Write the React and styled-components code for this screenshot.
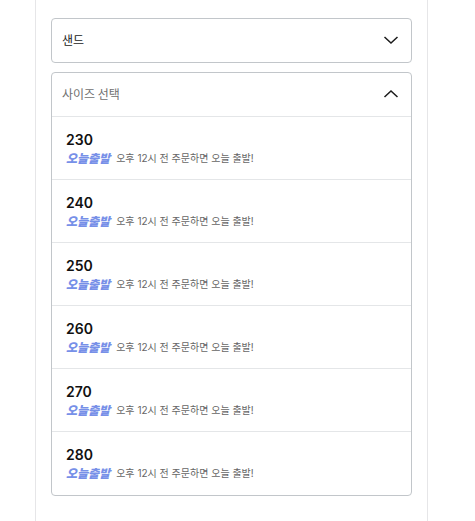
import { useState } from 'react';
import styled, { createGlobalStyle } from 'styled-components';

const sizes = ['230', '240', '250', '260', '270', '280'];

const Chevron = ({ up }) => (
  <svg width="16" height="10" viewBox="0 0 16 10" fill="none" aria-hidden="true">
    <path
      d={up ? 'M1.5 8L8 2L14.5 8' : 'M1.5 2L8 8L14.5 2'}
      stroke="#1c1c1c"
      strokeWidth="1.5"
    />
  </svg>
);

const App = () => {
  const [open, setOpen] = useState(true);
  const [selected, setSelected] = useState('');

  const handleSelect = (size) => {
    setSelected(size);
    setOpen(false);
  };

  return (
    <>
      <GlobalStyle />
      <Page>
        <Content>
          <Select>
            <SelectButton type="button" $filled>
              샌드
              <Chevron />
            </SelectButton>
          </Select>
          <Select>
            <SelectButton
              type="button"
              $filled={selected !== ''}
              aria-expanded={open}
              onClick={() => setOpen(!open)}
            >
              {selected || '사이즈 선택'}
              <Chevron up={open} />
            </SelectButton>
            {open && (
              <OptionList>
                {sizes.map((size) => (
                  <li key={size}>
                    <Option type="button" onClick={() => handleSelect(size)}>
                      <Size>{size}</Size>
                      <Delivery>
                        <Badge>오늘출발</Badge>
                        <Notice>오후 12시 전 주문하면 오늘 출발!</Notice>
                      </Delivery>
                    </Option>
                  </li>
                ))}
              </OptionList>
            )}
          </Select>
        </Content>
      </Page>
    </>
  );
};

export default App;

const GlobalStyle = createGlobalStyle`
  * {
    box-sizing: border-box;
  }

  body {
    margin: 0;
    background-color: #ffffff;
    font-family: Inter, "Noto Sans CJK KR", sans-serif;
  }

  button {
    font-family: inherit;
    text-align: left;
    background: none;
    border: 0;
    cursor: pointer;
  }
`;

const Page = styled.div`
  min-height: 100vh;
  padding: 0 47px 0 35px;
  display: flex;
`;

const Content = styled.main`
  flex: 1;
  display: flex;
  flex-direction: column;
  gap: 9px;
  padding: 18px 15px;
  border: solid #e6e6e8;
  border-width: 0 1px;
`;

const Select = styled.div`
  border: 1px solid #c2c6ca;
  border-radius: 4px;
  overflow: hidden;
`;

const SelectButton = styled.button`
  width: 100%;
  height: 43px;
  padding: 0 12px 2px 10px;
  display: flex;
  align-items: center;
  justify-content: space-between;
  font-family: "Noto Sans CJK KR", sans-serif;
  font-size: 12px;
  line-height: 18px;
  color: ${({ $filled }) => ($filled ? '#222222' : '#707070')};
`;

const OptionList = styled.ul`
  margin: 0;
  padding: 0 0 1px;
  list-style: none;
`;

const Option = styled.button`
  width: 100%;
  padding: 13px 14px 9px;
  display: flex;
  flex-direction: column;
  border-top: 1px solid #e4e6e8;
`;

const Size = styled.span`
  font-size: 14px;
  font-weight: 600;
  line-height: 20px;
  color: #111111;
`;

const Delivery = styled.span`
  display: flex;
  align-items: flex-start;
  gap: 6px;
`;

const Badge = styled.em`
  font-size: 12px;
  font-weight: 900;
  font-style: italic;
  line-height: 18px;
  padding-bottom: 2px;
  color: #7790e8;
`;

const Notice = styled.span`
  font-size: 10px;
  line-height: 16px;
  color: #666666;
`;
